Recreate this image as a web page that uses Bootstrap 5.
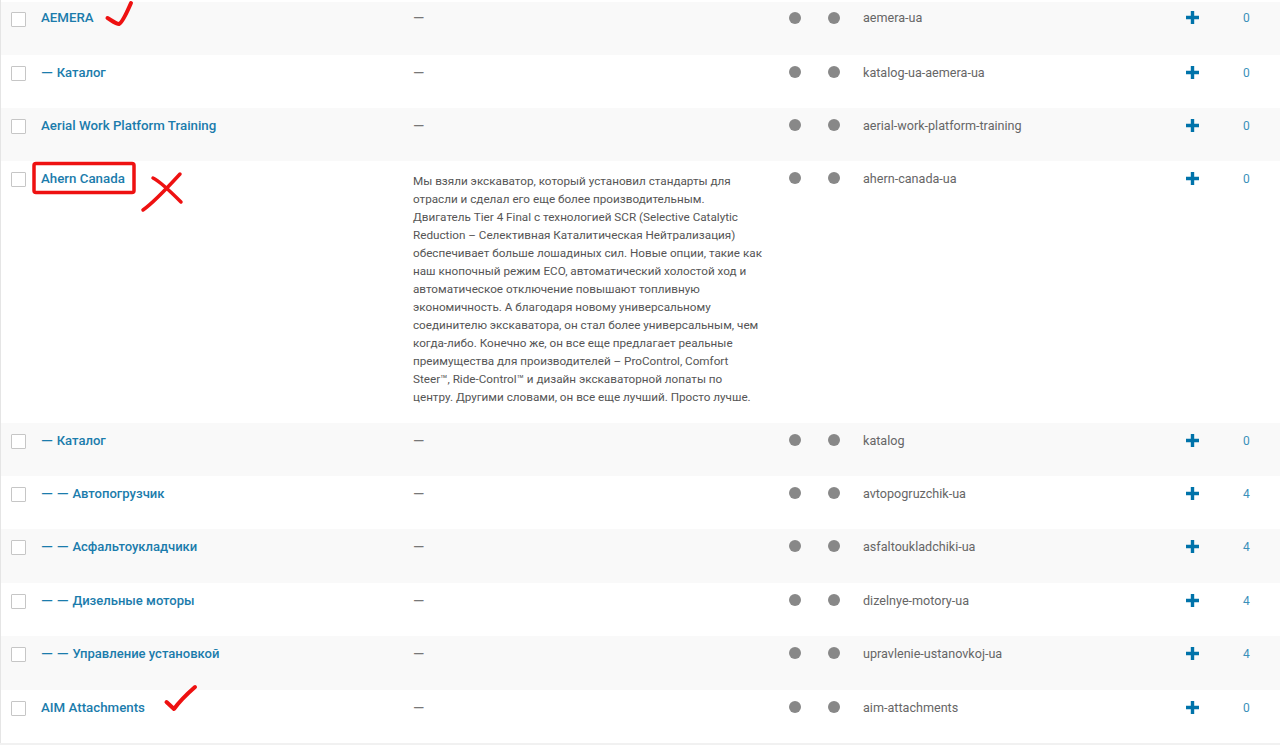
<!DOCTYPE html>
<html lang="en">
<head>
  <meta charset="UTF-8">
  <title>Categories</title>
  <link href="https://cdn.jsdelivr.net/npm/bootstrap@5.3.0/dist/css/bootstrap.min.css" rel="stylesheet">
  <style>
    body { background: #f1f1f1; overflow: hidden; font-family: Roboto, "Noto Sans", "Liberation Sans", sans-serif; }
    .terms-wrap { border-left: 1px solid #e5e5e5; padding-top: 2px; background: #fff; }
    .terms-table { table-layout: fixed; width: 1279px; margin: 0; font-size: 12.5px; line-height: 18px; --bs-table-striped-bg: #f9f9f9; --bs-table-striped-color: #666; --bs-table-color: #666; --bs-table-bg: #fff; }
    .terms-table td { padding: 9px 0 0; height: 53.4px; vertical-align: top; border: 0; }
    .terms-table tr:first-child td { height: 52.6px; padding-top: 7px; }
    .term-check { width: 15px; height: 15px; margin: 2px 0 0 10px; border: 1px solid #c6c6c6; border-radius: 1px; background: #fff; display: block; }
    .term-name { color: #1b7cac; font-size: 13.3px; font-weight: 500; text-decoration: none; }
    .term-name.is-child { font-size: 13.05px; }
    .term-prefix { font-size: 15.4px; line-height: 1; vertical-align: -1px; }
    .term-desc { white-space: nowrap; }
    .term-dash { color: #777; display: block; padding-top: 1px; font-size: 14.5px; }
    .term-desc-text { display: block; padding: 2px 0 16.2px; font-size: 11.7px; color: #555; }
    .term-dot { display: block; width: 12px; height: 12px; margin-top: 2px; border-radius: 50%; background: #888; }
    .term-plus { display: block; margin-top: 2px; }
    .term-count { font-size: 12px; }
    .term-count span { color: #3a90ba; }
    .term-slug { font-size: 12.6px; }
    .terms-table tr:first-child .term-check { margin-top: 3px; }
    .terms-table tr:first-child .term-dot { margin-top: 3px; }
    .marks { position: absolute; top: 0; left: 0; pointer-events: none; }
  </style>
</head>
<body>
  <div class="terms-wrap position-relative">
    <table class="table table-striped terms-table">
      <colgroup>
        <col style="width:40px"><col style="width:372px"><col style="width:376px"><col style="width:39px"><col style="width:35px"><col style="width:323px"><col style="width:57px"><col style="width:37px">
      </colgroup>
      <tbody id="termRows"></tbody>
    </table>
    <!-- hand drawn red annotations lying over the table -->
    <svg class="marks" width="1280" height="745" viewBox="0 0 1280 745" fill="none" stroke="#ee1111" stroke-linecap="round" stroke-linejoin="round">
      <path d="M106.500 18C110 20 115 24 118 24C122 22 126 12 130 3" stroke-width="4"/>
      <rect x="33" y="163.500" width="100" height="29" rx="2" stroke-width="3.500"/>
      <path d="M152 178C160 182 172 194 180 202" stroke-width="3.500"/>
      <path d="M142 210C152 203 168 186 179 174" stroke-width="3.500"/>
      <path d="M165.500 702L173 709C178 702 186 694 194 687" stroke-width="4"/>
    </svg>
  </div>
  <script src="https://cdn.jsdelivr.net/npm/bootstrap@5.3.0/dist/js/bootstrap.bundle.min.js"></script>
  <script>
    const descText = ['Мы взяли экскаватор, который установил стандарты для','отрасли и сделал его еще более производительным.','Двигатель Tier 4 Final с технологией SCR (Selective Catalytic','Reduction – Селективная Каталитическая Нейтрализация)','обеспечивает больше лошадиных сил. Новые опции, такие как','наш кнопочный режим ECO, автоматический холостой ход и','автоматическое отключение повышают топливную','экономичность. А благодаря новому универсальному','соединителю экскаватора, он стал более универсальным, чем','когда-либо. Конечно же, он все еще предлагает реальные','преимущества для производителей – ProControl, Comfort','Steer™, Ride-Control™ и дизайн экскаваторной лопаты по','центру. Другими словами, он все еще лучший. Просто лучше.'].join('<br>');
    const terms = [
      ['', 'AEMERA', 'aemera-ua', 0],
      ['— ', 'Каталог', 'katalog-ua-aemera-ua', 0],
      ['', 'Aerial Work Platform Training', 'aerial-work-platform-training', 0],
      ['', 'Ahern Canada', 'ahern-canada-ua', 0, true],
      ['— ', 'Каталог', 'katalog', 0],
      ['— — ', 'Автопогрузчик', 'avtopogruzchik-ua', 4],
      ['— — ', 'Асфальтоукладчики', 'asfaltoukladchiki-ua', 4],
      ['— — ', 'Дизельные моторы', 'dizelnye-motory-ua', 4],
      ['— — ', 'Управление установкой', 'upravlenie-ustanovkoj-ua', 4],
      ['', 'AIM Attachments', 'aim-attachments', 0]
    ];
    const plus = '<svg class="term-plus" width="13" height="13" viewBox="0 0 13 13"><path d="M6.5 0v13M0 6.5h13" stroke="#0073aa" stroke-width="3.4"/></svg>';
    document.getElementById('termRows').innerHTML = terms.map(([prefix, name, slug, count, hasDesc]) => `
      <tr>
        <td><span class="term-check"></span></td>
        <td><a class="term-name${prefix ? ' is-child' : ''}" href="#"><span class="term-prefix">${prefix}</span>${name}</a></td>
        <td class="term-desc">${hasDesc ? `<span class="term-desc-text">${descText}</span>` : '<span class="term-dash">—</span>'}</td>
        <td><span class="term-dot"></span></td>
        <td><span class="term-dot"></span></td>
        <td class="term-slug">${slug}</td>
        <td>${plus}</td>
        <td class="term-count"><span>${count}</span></td>
      </tr>`).join('');
  </script>
</body>
</html>
